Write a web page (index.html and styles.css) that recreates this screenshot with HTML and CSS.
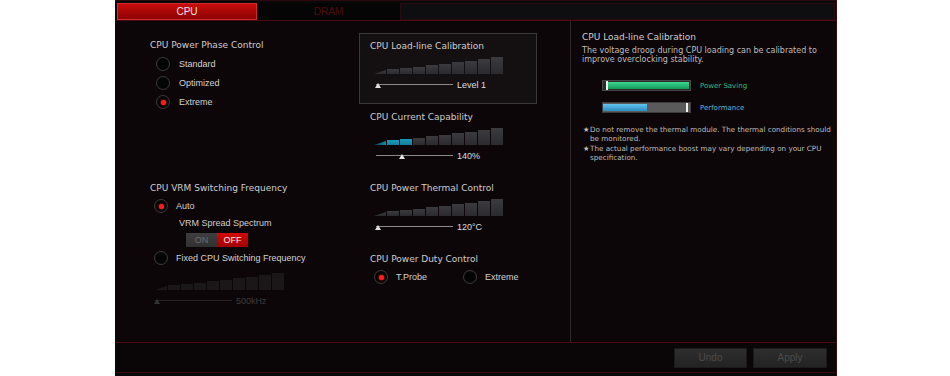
FILE: index.html
```html
<!DOCTYPE html>
<html>
<head>
<meta charset="utf-8">
<link rel="stylesheet" href="styles.css">
</head>
<body>
<div class="app">
  <div class="tabs">
    <div class="tab active">CPU</div>
    <div class="tab">DRAM</div>
    <div class="tab-rest"></div>
  </div>
  <div class="main">
    <div class="settings">
      <div class="col col-left">
        <section class="group">
          <h3>CPU Power Phase Control</h3>
          <div class="radios phase">
            <div class="radio"><span class="rdot"></span><span class="rlabel">Standard</span></div>
            <div class="radio"><span class="rdot"></span><span class="rlabel">Optimized</span></div>
            <div class="radio"><span class="rdot on"></span><span class="rlabel">Extreme</span></div>
          </div>
        </section>
        <section class="group vrm">
          <h3>CPU VRM Switching Frequency</h3>
          <div class="radio vrm-auto"><span class="rdot on"></span><span class="rlabel gap8">Auto</span></div>
          <div class="sublabel">VRM Spread Spectrum</div>
          <div class="toggle">
            <span class="opt off-state">ON</span>
            <span class="opt on-state">OFF</span>
          </div>
          <div class="radio vrm-fixed"><span class="rdot"></span><span class="rlabel gap8">Fixed CPU Switching Frequency</span></div>
          <div class="graph dim vrm-graph">
            <span class="seg"></span><span class="seg"></span><span class="seg"></span><span class="seg"></span><span class="seg"></span>
            <span class="seg"></span><span class="seg"></span><span class="seg"></span><span class="seg"></span><span class="seg"></span>
          </div>
          <div class="slider dim vrm-slider">
            <div class="track"><span class="thumb"></span></div>
            <span class="value">500kHz</span>
          </div>
        </section>
      </div>
      <div class="col col-mid">
        <section class="card selected">
          <h3>CPU Load-line Calibration</h3>
          <div class="graph">
            <span class="seg"></span><span class="seg"></span><span class="seg"></span><span class="seg"></span><span class="seg"></span>
            <span class="seg"></span><span class="seg"></span><span class="seg"></span><span class="seg"></span><span class="seg"></span>
          </div>
          <div class="slider">
            <div class="track"><span class="thumb"></span></div>
            <span class="value">Level 1</span>
          </div>
        </section>
        <section class="card">
          <h3>CPU Current Capability</h3>
          <div class="graph fill3">
            <span class="seg"></span><span class="seg"></span><span class="seg"></span><span class="seg"></span><span class="seg"></span>
            <span class="seg"></span><span class="seg"></span><span class="seg"></span><span class="seg"></span><span class="seg"></span>
          </div>
          <div class="slider">
            <div class="track"><span class="thumb at-3"></span></div>
            <span class="value">140%</span>
          </div>
        </section>
        <section class="card">
          <h3>CPU Power Thermal Control</h3>
          <div class="graph">
            <span class="seg"></span><span class="seg"></span><span class="seg"></span><span class="seg"></span><span class="seg"></span>
            <span class="seg"></span><span class="seg"></span><span class="seg"></span><span class="seg"></span><span class="seg"></span>
          </div>
          <div class="slider">
            <div class="track"><span class="thumb"></span></div>
            <span class="value">120°C</span>
          </div>
        </section>
        <section class="card">
          <h3>CPU Power Duty Control</h3>
          <div class="duty">
            <div class="radio duty-opt"><span class="rdot on"></span><span class="rlabel gap8">T.Probe</span></div>
            <div class="radio"><span class="rdot"></span><span class="rlabel gap8">Extreme</span></div>
          </div>
        </section>
      </div>
    </div>
    <aside class="info">
      <h3>CPU Load-line Calibration</h3>
      <p class="desc">The voltage droop during CPU loading can be calibrated to<br>improve overclocking stability.</p>
      <div class="meter-row first">
        <div class="meter ps"><span class="fill"></span><span class="marker"></span></div>
        <span class="mlabel ps-label">Power Saving</span>
      </div>
      <div class="meter-row">
        <div class="meter perf"><span class="fill"></span><span class="marker"></span></div>
        <span class="mlabel perf-label">Performance</span>
      </div>
      <div class="notes">
        <div class="note"><span class="star">★</span><span class="ntext">Do not remove the thermal module. The thermal conditions should<br>be monitored.</span></div>
        <div class="note"><span class="star">★</span><span class="ntext">The actual performance boost may vary depending on your CPU<br>specification.</span></div>
      </div>
    </aside>
  </div>
  <div class="footer">
    <button class="btn undo">Undo</button>
    <button class="btn apply">Apply</button>
  </div>
</div>
</body>
</html>
```

FILE: styles.css
```css
html, body {
  margin: 0;
  padding: 0;
  background: #ffffff;
}

.app {
  margin-left: 115px;
  width: 722px;
  height: 376px;
  box-sizing: border-box;
  border-right: 1px solid #3c0b12;
  background: #0b0809;
  display: flex;
  flex-direction: column;
  font-family: "Liberation Sans", Arial, sans-serif;
  overflow: hidden;
}

/* ---------- tabs ---------- */
.tabs {
  height: 21px;
  box-sizing: border-box;
  border-top: 1px solid #2a0a0f;
  border-bottom: 1px solid #4a0c13;
  padding: 2px 1px 0 2px;
  display: flex;
  background: #09090a;
}

.tab {
  width: 143px;
  height: 17px;
  box-sizing: border-box;
  font-size: 10px;
  line-height: 17px;
  text-align: center;
  color: #4e0a0c;
  background: #050505;
}

.tab.active {
  width: 140px;
  color: #f3e4e4;
  background: linear-gradient(#c80c0c, #8c0202);
  border: 1px solid #d22a2a;
  line-height: 15px;
}

.tab-rest {
  flex: 1;
  height: 17px;
  box-sizing: border-box;
  background: #0e0d0f;
  border: 1px solid #260b10;
}

/* ---------- main ---------- */
.main {
  height: 321px;
  display: flex;
  background: #0d0608;
}

.settings {
  flex: none;
  width: 455px;
  box-sizing: border-box;
  padding-left: 35px;
  display: flex;
}

h3 {
  margin: 0;
  font-family: "DejaVu Sans", Verdana, sans-serif;
  font-weight: normal;
  font-size: 9px;
  line-height: 12px;
  color: #cdcdcd;
  white-space: nowrap;
}

.col-left {
  width: 209px;
  padding-top: 18px;
}

.col-mid {
  width: 178px;
  padding-top: 12px;
}

/* radios */
.radios.phase {
  margin-top: 6px;
  padding-left: 6px;
  display: flex;
  flex-direction: column;
  gap: 5px;
}

.radio {
  display: flex;
  align-items: center;
  height: 14px;
}

.rdot {
  width: 14px;
  height: 14px;
  box-sizing: border-box;
  border-radius: 50%;
  border: 1px solid #3b3a3b;
  background: radial-gradient(circle, #050404 55%, #171516 100%);
  display: flex;
  align-items: center;
  justify-content: center;
  flex: none;
}

.rdot.on::after {
  content: "";
  width: 5px;
  height: 5px;
  border-radius: 50%;
  background: #ff1c1c;
  box-shadow: 0 0 2px #ff2a2a;
}

.rlabel {
  margin-left: 9px;
  font-size: 9px;
  color: #d2d2d2;
  white-space: nowrap;
}

.rlabel.gap8 {
  margin-left: 8px;
}

.group.vrm {
  margin-top: 73px;
}

.vrm-auto {
  margin-top: 5px;
  padding-left: 4px;
}

.sublabel {
  margin-top: 4px;
  padding-left: 29px;
  font-size: 9px;
  line-height: 12px;
  color: #cfcfcf;
}

.toggle {
  margin-top: 4px;
  margin-left: 36px;
  display: flex;
  width: 62px;
}

.opt {
  width: 31px;
  height: 14px;
  font-size: 9px;
  line-height: 14px;
  text-align: center;
}

.opt.off-state {
  background: linear-gradient(#3e3e3e, #313131);
  color: #6d6d6d;
}

.opt.on-state {
  background: linear-gradient(#d40808, #a00000);
  color: #f4eaea;
}

.vrm-fixed {
  margin-top: 4px;
  padding-left: 4px;
}

/* bar graphs */
.graph {
  margin-top: 5px;
  margin-left: 4px;
  width: 129px;
  height: 17px;
  display: flex;
  align-items: flex-end;
  gap: 1px;
}

.seg {
  width: 12px;
  flex: none;
  background: linear-gradient(#3a3a3f, #2b2b2f);
}

.seg:nth-child(1) { height: 4px; clip-path: polygon(0 100%, 100% 0, 100% 100%); }
.seg:nth-child(2) { height: 5px; }
.seg:nth-child(3) { height: 6px; }
.seg:nth-child(4) { height: 7px; }
.seg:nth-child(5) { height: 9px; }
.seg:nth-child(6) { height: 10px; }
.seg:nth-child(7) { height: 12px; }
.seg:nth-child(8) { height: 13px; }
.seg:nth-child(9) { height: 15px; }
.seg:nth-child(10) { height: 17px; }

.graph.fill3 .seg:nth-child(1) { background: linear-gradient(90deg, #0b3f4e, #178aa6); }
.graph.fill3 .seg:nth-child(2),
.graph.fill3 .seg:nth-child(3) { background: linear-gradient(#1d9ab8, #14809c); }

.graph.dim .seg {
  background: #1b1618;
}

.vrm-graph {
  margin-top: 8px;
  margin-left: 5px;
}

/* sliders */
.slider {
  margin-top: 6px;
  margin-left: 4px;
  height: 10px;
  display: flex;
  align-items: center;
}

.track {
  position: relative;
  width: 79px;
  height: 10px;
}

.track::before {
  content: "";
  position: absolute;
  left: 2px;
  right: 0;
  top: 4px;
  height: 1px;
  background: #8a8a8a;
}

.thumb {
  position: absolute;
  left: 1px;
  top: 3px;
  width: 0;
  height: 0;
  border-left: 3.5px solid transparent;
  border-right: 3.5px solid transparent;
  border-bottom: 5px solid #e2e2e2;
}

.thumb.at-3 {
  left: 25px;
}

.value {
  margin-left: 4px;
  font-size: 9px;
  color: #dedede;
  white-space: nowrap;
}

.vrm-slider {
  margin-left: 3px;
}

.slider.dim .track::before { background: #262324; }
.slider.dim .thumb { border-bottom-color: #333; }
.slider.dim .value { color: #3e3c3d; }

/* cards */
.card {
  height: 71px;
  box-sizing: border-box;
  border: 1px solid transparent;
  padding: 6px 10px 0 10px;
}

.card.selected {
  border-color: #3a3839;
  background: #141012;
}

.duty {
  margin-top: 5px;
  margin-left: 4px;
  display: flex;
}

.duty-opt {
  width: 89px;
}

/* ---------- info panel ---------- */
.info {
  flex: 1;
  min-width: 0;
  overflow: hidden;
  box-sizing: border-box;
  border-left: 1px solid #2d2a2b;
  padding: 10px 8px 0 11px;
}

.desc {
  margin: 3px 0 0;
  font-family: "DejaVu Sans", Verdana, sans-serif;
  font-size: 8px;
  line-height: 9px;
  color: #bcbcbc;
  white-space: nowrap;
}

.meter-row {
  margin-top: 11px;
  margin-left: 20px;
  display: flex;
  align-items: center;
  gap: 9px;
}

.meter-row.first {
  margin-top: 16px;
}

.meter {
  position: relative;
  width: 89px;
  height: 11px;
  box-sizing: border-box;
  padding: 1px;
  border: 1px solid #474747;
  background: #2b2b2b;
  display: flex;
}

.meter .fill {
  height: 100%;
}

.meter.ps .fill {
  margin-left: 3px;
  width: 82px;
  background: linear-gradient(#3ed78f, #139a5a);
}

.meter.perf {
  background: #5a5a5a;
  border-color: #3c3c3c;
  padding: 1px 0;
}

.meter.perf .fill {
  width: 44px;
  background: linear-gradient(#62c4ee, #2b8bc2);
}

.marker {
  position: absolute;
  top: 0;
  bottom: 0;
  width: 2px;
  background: #f2f2f2;
}

.meter.ps .marker { left: 3px; }
.meter.perf .marker { right: 2px; }

.mlabel {
  font-family: "DejaVu Sans", Verdana, sans-serif;
  font-size: 7px;
  white-space: nowrap;
}

.ps-label { color: #2fbf80; }
.perf-label { color: #55b6de; }

.notes {
  margin-top: 12px;
  display: flex;
  flex-direction: column;
  gap: 1px;
}

.note {
  display: flex;
  font-family: "DejaVu Sans", Verdana, sans-serif;
  font-size: 7.2px;
  line-height: 9px;
  color: #bdbdbd;
  white-space: nowrap;
}

.star {
  width: 7px;
  margin-left: 1px;
  flex: none;
}

/* ---------- footer ---------- */
.footer {
  height: 31px;
  box-sizing: border-box;
  border-top: 1px solid #4a0b12;
  border-bottom: 1px solid #3a0a10;
  background: #0a0607;
  display: flex;
  align-items: center;
  justify-content: flex-end;
  gap: 6px;
  padding-right: 9px;
}

.btn {
  height: 20px;
  padding: 0;
  font-family: "Liberation Sans", Arial, sans-serif;
  font-size: 10px;
  color: #4b4b4b;
  background: linear-gradient(#2e2e2e, #232323);
  border: 1px solid #1b1b1b;
}

.btn.undo { width: 73px; }
.btn.apply { width: 74px; }
```
